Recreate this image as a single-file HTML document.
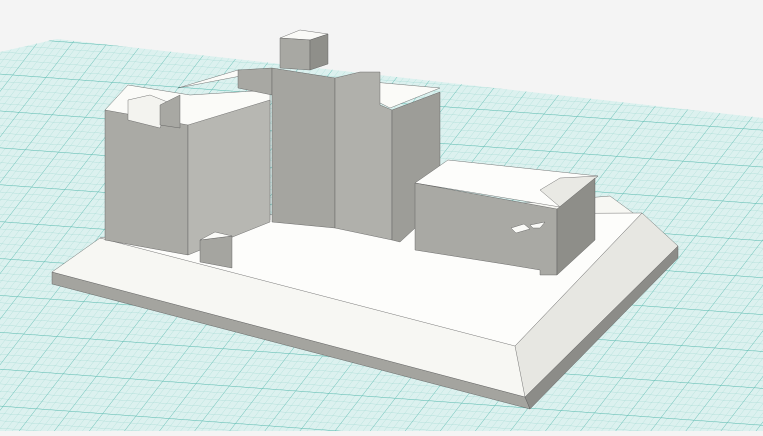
<!DOCTYPE html>
<html><head><style>html,body{margin:0;padding:0;background:#f4f4f4;overflow:hidden}</style></head>
<body>
<svg width="763" height="431" viewBox="0 0 763 431" xmlns="http://www.w3.org/2000/svg">
<defs>
<pattern id="fine" width="7" height="7" patternUnits="userSpaceOnUse" patternTransform="skewX(-35) rotate(4)">
<path d="M7 0H0V7" fill="none" stroke="#9fd8d1" stroke-width="0.6"/>
</pattern>
<pattern id="coarse" width="35" height="35" patternUnits="userSpaceOnUse" patternTransform="skewX(-35) rotate(4)">
<path d="M35 0H0V35" fill="none" stroke="#5dbcb1" stroke-width="0.9"/>
</pattern>
</defs>
<rect width="763" height="431" fill="#f4f4f4"/>
<polygon points="0,52 57,39 763,118 763,431 0,431" fill="#dcf1ef"/>
<polygon points="0,52 57,39 763,118 763,431 0,431" fill="url(#fine)"/>
<polygon points="0,52 57,39 763,118 763,431 0,431" fill="url(#coarse)"/>
<g stroke="#555" stroke-width="0.4" stroke-linejoin="round">
<!-- base sides -->
<polygon points="52,272 525,397 530,409 52,284" fill="#a4a49f"/>
<polygon points="525,397 678,246 678,258 530,409" fill="#8c8c88"/>
<!-- base top -->
<polygon points="52,272 100,238 610,196 678,246 525,397" fill="#f7f7f3"/>
<polygon points="515,346 642,213 678,246 525,397" fill="#e7e7e2"/>
<polygon points="100,238 230,215 642,213 515,346" fill="#fdfdfb"/>
<!-- left block -->
<polygon points="105,110 128,85 190,95 270,90 270,220 190,250" fill="#fbfbf8"/>
<polygon points="105,110 188,125 188,255 105,240" fill="#aaaaa5"/>
<polygon points="188,125 270,100 270,222 230,238 188,255" fill="#b7b7b2"/>
<polygon points="128,100 150,95 170,103 160,128 128,120" fill="#f3f3ef"/>
<polygon points="160,105 180,95 180,128 160,125" fill="#a8a8a3"/>
<polygon points="200,240 232,236 232,268 200,262" fill="#a5a5a0"/>
<polygon points="200,240 215,232 232,236 " fill="#fafaf7"/>
<!-- central towers -->
<polygon points="178,88 238,70 440,88 390,108 335,80 272,70" fill="#fbfbf8"/>
<polygon points="238,70 272,68 272,95 238,88" fill="#a8a8a3"/>
<polygon points="272,68 335,78 335,228 272,222" fill="#a5a5a0"/>
<polygon points="335,78 360,72 380,72 380,105 392,110 392,240 335,228" fill="#b0b0ab"/>
<polygon points="392,110 440,92 440,205 400,242 392,240" fill="#9d9d98"/>
<polygon points="280,38 300,30 328,34 310,40" fill="#fafaf7"/>
<polygon points="280,38 310,40 310,70 280,68" fill="#a8a8a3"/>
<polygon points="310,40 328,34 328,64 310,70" fill="#8f8f8a"/>
<!-- right building -->
<polygon points="415,183 448,160 598,176 560,207" fill="#fdfdfb"/>
<polygon points="540,190 560,178 598,176 560,207" fill="#e9e9e4"/>
<polygon points="415,183 557,209 557,275 540,275 540,270 510,265 415,250" fill="#a9a9a4"/>
<polygon points="557,209 595,178 595,240 557,275" fill="#8e8e89"/>
<polygon points="511,228 524,224 530,229 516,233" fill="#fafaf7"/>
<polygon points="530,225 545,222 540,228 533,228" fill="#fafaf7"/>
</g>
</svg>
</body></html>
